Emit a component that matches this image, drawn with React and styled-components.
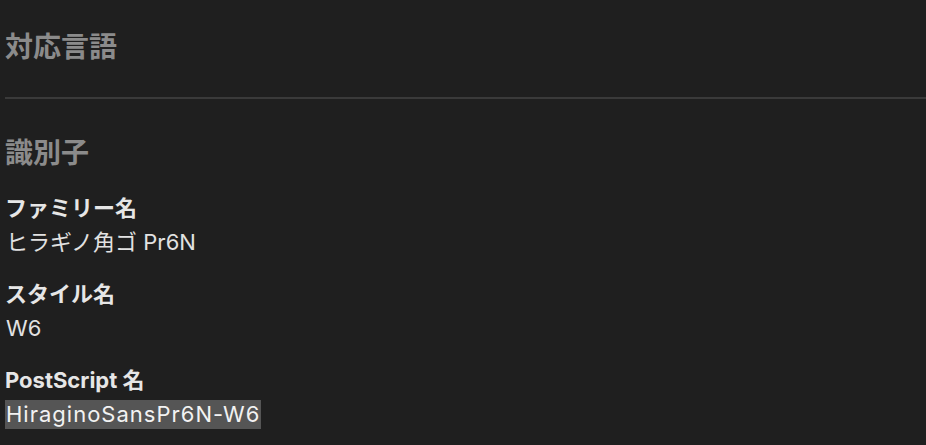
import React from "react";
import styled, { createGlobalStyle } from "styled-components";

const Global = createGlobalStyle`
  html, body { margin: 0; padding: 0; background: #1f1f1f; }
  body { font-family: "Inter", "Noto Sans CJK JP", sans-serif; }
  ::selection { background: #555555; }
`;

const Page = styled.div`
  padding: 22px 0 0 5px;
  min-height: 445px;
  box-sizing: border-box;
  background: #1f1f1f;
`;

const Section = styled.section`
  display: flex;
  flex-direction: column;
`;

const Heading = styled.h2`
  margin: 0;
  font-family: "Noto Sans CJK JP", sans-serif;
  font-size: 28px;
  line-height: 46px;
  font-weight: 700;
  color: #8b8b8b;
`;

const Divider = styled.hr`
  margin: ${(p) => p.$top}px 0 ${(p) => p.$bottom}px 0;
  border: 0;
  height: 2px;
  background: #3a3a3a;
`;

const Field = styled.div`
  display: flex;
  flex-direction: column;
  align-items: flex-start;
  margin-top: ${(p) => p.$top}px;
`;

const Label = styled.div`
  font-size: 22px;
  line-height: 30px;
  font-weight: 700;
  color: #e6e6e6;
`;

const Value = styled.div`
  margin-top: 5px;
  font-size: 22px;
  line-height: 29px;
  font-weight: 400;
  padding: 0 1px;
  letter-spacing: ${(p) => (p.$selected ? "1px" : "0")};
  background: ${(p) => (p.$selected ? "#555555" : "transparent")};
  color: ${(p) => (p.$selected ? "#f2f2f2" : "#e2e2e2")};
`;

export default function App() {
  return (
    <>
      <Global />
      <Page>
        <Section>
          <Heading>対応言語</Heading>
        </Section>
        <Divider $top={29} $bottom={29} />
        <Section>
          <Heading>識別子</Heading>
          <Field $top={19}>
            <Label>ファミリー名</Label>
            <Value>ヒラギノ角ゴ Pr6N</Value>
          </Field>
          <Field $top={22}>
            <Label>スタイル名</Label>
            <Value>W6</Value>
          </Field>
          <Field $top={22}>
            <Label>PostScript 名</Label>
            <Value $selected>HiraginoSansPr6N-W6</Value>
          </Field>
        </Section>
      </Page>
    </>
  );
}
